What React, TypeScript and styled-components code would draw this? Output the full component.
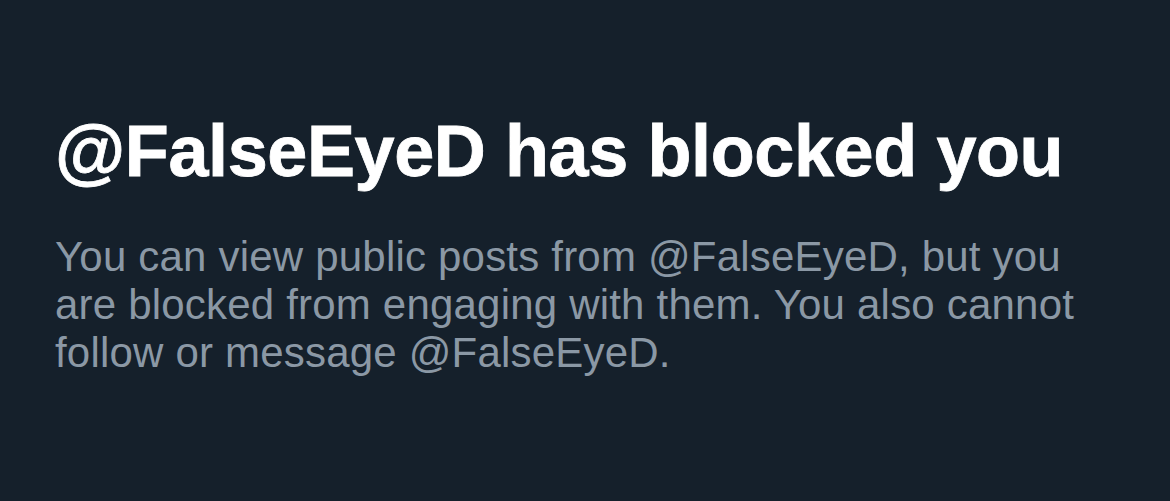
import styled, { createGlobalStyle } from "styled-components";

const GlobalStyle = createGlobalStyle`
    html, body {
        margin: 0;
        padding: 0;
        background-color: #15202b;
    }
`;

const Page = styled.div`
    width: 1170px;
    height: 501px;
    box-sizing: border-box;
    padding: 107px 40px 0 55px;
    background-color: #15202b;
    font-family: "Liberation Sans", Arial, sans-serif;
`;

const Title = styled.h1`
    margin: 0 0 38px;
    font-size: 72px;
    line-height: 88px;
    font-weight: 700;
    color: #ffffff;
    letter-spacing: -0.4px;
    -webkit-text-stroke: 0.8px #ffffff;
`;

const Message = styled.p`
    margin: 0;
    max-width: 1070px;
    font-size: 42px;
    line-height: 48px;
    color: #8b98a5;
    letter-spacing: 0.2px;
`;

function App() {
    const handle = "@FalseEyeD";
    return (
        <>
            <GlobalStyle />
            <Page>
                <Title>{handle} has blocked you</Title>
                <Message>
                    You can view public posts from {handle}, but you are blocked from engaging with them. You also cannot follow or message {handle}.
                </Message>
            </Page>
        </>
    );
}

export default App;
